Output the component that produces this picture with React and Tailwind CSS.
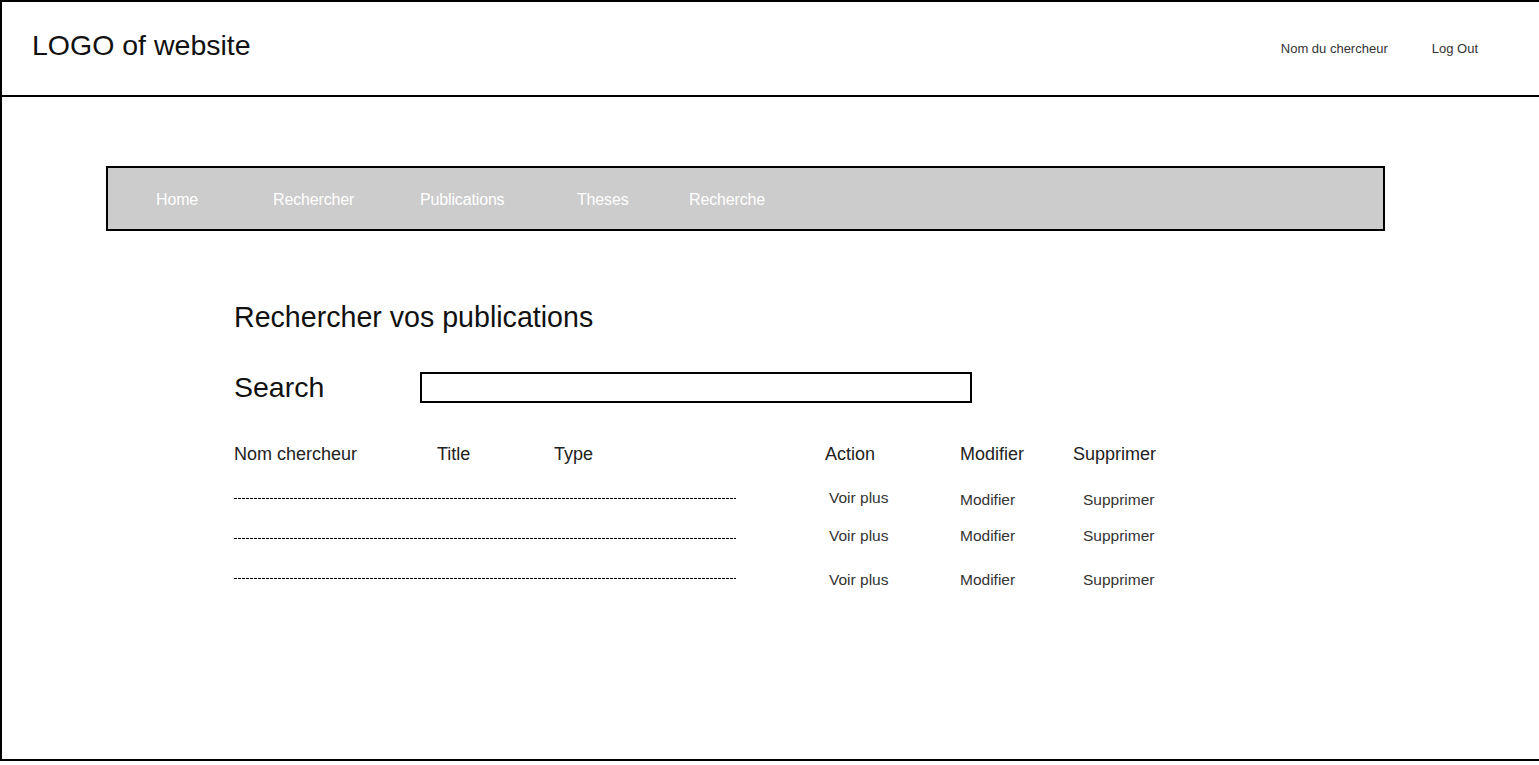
import React from "react";

const navItems = [
  { label: "Home", width: "w-[117px]" },
  { label: "Rechercher", width: "w-[147px]" },
  { label: "Publications", width: "w-[157px]" },
  { label: "Theses", width: "w-[112px]" },
  { label: "Recherche", width: "" },
];

const rows = [
  { voir: "pt-0", rest: "pt-[4px]" },
  { voir: "pb-[4px]", rest: "pb-[4px]" },
  { voir: "pt-[4px]", rest: "pt-[4px]" },
];

export default function App() {
  return (
    <div className="h-[761px] border-2 border-r-0 border-black bg-white font-['Liberation_Sans',Arial,sans-serif] text-black">
      {/* header */}
      <header className="h-[95px] border-b-2 border-black flex justify-between">
        <div className="pl-[30px] pt-[27px] text-[28.5px] leading-[32px] text-[#111]">
          LOGO of website
        </div>
        <div className="flex items-center pr-[61px] text-[13px] text-[#333]">
          <span>Nom du chercheur</span>
          <span className="ml-[44px]">Log Out</span>
        </div>
      </header>

      {/* nav bar */}
      <nav className="mt-[69px] ml-[104px] w-[1279px] h-[65px] border-2 border-black bg-[#cccccc] flex items-center pl-[48px] pt-[2px] text-[16px] text-white tracking-[-0.15px]">
        {navItems.map((item) => (
          <span key={item.label} className={item.width}>
            {item.label}
          </span>
        ))}
      </nav>

      <main className="ml-[232px] mt-[70px]">
        <h1 className="text-[28.6px] leading-[32px] text-[#111]">
          Rechercher vos publications
        </h1>

        <div className="mt-[38px] flex items-start">
          <div className="w-[186px] text-[28.5px] leading-[32px] text-[#111]">Search</div>
          <input
            type="text"
            className="mt-[1px] w-[552px] h-[31px] border-2 border-black outline-none px-2"
          />
        </div>

        {/* table head */}
        <div className="mt-[39px] flex text-[18px] leading-[24px] text-[#222]">
          <div className="w-[203px]">Nom chercheur</div>
          <div className="w-[117px]">Title</div>
          <div className="w-[271px]">Type</div>
          <div className="w-[135px]">Action</div>
          <div className="w-[113px]">Modifier</div>
          <div>Supprimer</div>
        </div>

        {/* rows */}
        <div className="mt-[12px]">
          {rows.map((row, i) => (
            <div key={i} className="h-[40px] flex items-center text-[15.5px] leading-[20px] text-[#333]">
              <div className="w-[595px] flex items-center">
                <div className="w-[502px] h-px bg-[repeating-linear-gradient(90deg,#000_0_3px,transparent_3px_4px)]" />
              </div>
              <div className={`w-[131px] ${row.voir}`}>Voir plus</div>
              <div className={`w-[123px] ${row.rest}`}>Modifier</div>
              <div className={row.rest}>Supprimer</div>
            </div>
          ))}
        </div>
      </main>
    </div>
  );
}
